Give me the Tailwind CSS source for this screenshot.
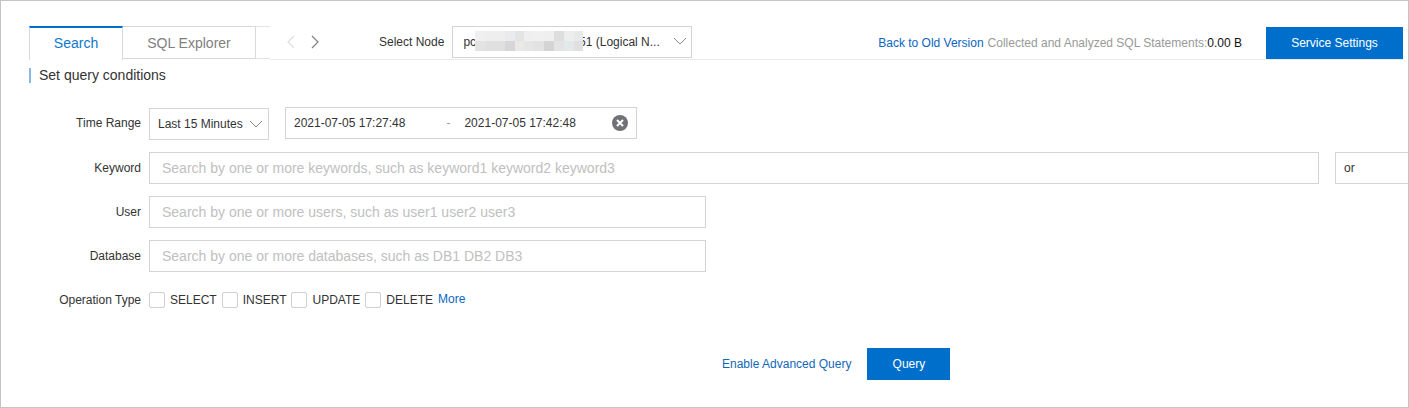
<!DOCTYPE html>
<html lang="en">
<head>
<meta charset="utf-8">
<title>Search</title>
<script src="https://cdn.jsdelivr.net/npm/@tailwindcss/browser@4"></script>
</head>
<body class="bg-white">
<div class="w-[1409px] h-[408px] border border-[#c4c4c4] overflow-hidden font-['Liberation_Sans',Arial,sans-serif] text-xs text-[#333]">
  <!-- top bar -->
  <div class="flex items-start h-[33px] mt-[25px] ml-[28px] mr-[5px]">
    <div class="w-[94px] h-[34px] border-t-2 border-t-[#006fcc] border-l border-l-[#d9d9d9] border-r border-r-[#d9d9d9] text-sm text-[#0d78cf] flex items-center justify-center bg-white relative z-10 pb-[2px]">Search</div>
    <div class="w-[133px] h-[33px] border border-[#d9d9d9] border-l-0 text-sm text-[#7f7f7f] flex items-center justify-center">SQL Explorer</div>
    <div class="w-[14px] h-[33px] border-t border-b border-[#e3e3e3]"></div>
    <div class="flex-1 h-[34px] border-b border-[#ebebeb] flex items-start">
      <div class="flex gap-[14px] ml-[16px] mt-[9px]">
        <svg width="10" height="14" viewBox="0 0 10 14" fill="none" stroke="#dedede" stroke-width="1.2"><path d="M8 1 2 7l6 6"/></svg>
        <svg width="10" height="14" viewBox="0 0 10 14" fill="none" stroke="#808080" stroke-width="1.2"><path d="M2 1l6 6-6 6"/></svg>
      </div>
      <span class="ml-[59px] mt-[9px] leading-[14px]">Select Node</span>
      <div class="relative ml-[8px] w-[240px] h-[32px] border border-[#d4d4d4] flex items-center pl-[10px]">
        <span>pc</span><span class="w-[103px]"></span><span class="whitespace-nowrap">51 (Logical N...</span>
        <div class="absolute left-[22px] top-[4px] w-[108px] h-[20px] grid grid-cols-[repeat(11,1fr)] grid-rows-2">
          <i class="bg-[#efefef]"></i><i class="bg-[#eeeeee]"></i><i class="bg-[#eeeeee]"></i><i class="bg-[#e9ebee]"></i><i class="bg-[#e4e4e4]"></i><i class="bg-[#efefef]"></i><i class="bg-[#f0f0f0]"></i><i class="bg-[#efefef]"></i><i class="bg-[#dedede]"></i><i class="bg-[#ededed]"></i><i class="bg-[#e8eaea]"></i>
          <i class="bg-[#e3e3e3]"></i><i class="bg-[#e0e0e0]"></i><i class="bg-[#e0e0e0]"></i><i class="bg-[#d6d6d8]"></i><i class="bg-[#ebe9e8]"></i><i class="bg-[#e4e6e6]"></i><i class="bg-[#e2e2e2]"></i><i class="bg-[#d4d4d4]"></i><i class="bg-[#e2e4e4]"></i><i class="bg-[#e3e8e8]"></i><i class="bg-[#e0e0e0]"></i>
        </div>
        <svg class="absolute right-[4px] top-[10px]" width="14" height="9" viewBox="0 0 14 9" fill="none" stroke="#8a8a8a"><path d="M1 1l6 6 6-6"/></svg>
      </div>
      <div class="flex-1 flex justify-end items-start">
        <a class="text-[#0a66c2] mt-[10px] leading-[14px]">Back to Old Version</a>
        <span class="ml-[4px] mt-[10px] leading-[14px] text-[#999] whitespace-nowrap">Collected and Analyzed SQL Statements:<span class="text-[#111]">0.00 B</span></span>
        <button class="ml-[24px] mt-[1px] w-[137px] h-[32px] bg-[#006fcc] text-white text-xs">Service Settings</button>
      </div>
    </div>
  </div>
  <!-- section title -->
  <div class="ml-[28px] mt-[9px] h-[15px] border-l-2 border-[#88b9e3] pl-[8px] flex items-center text-sm text-[#333]"><span class="leading-[15px]">Set query conditions</span></div>
  <!-- form -->
  <div class="mt-[25px] flex flex-col">
    <div class="flex items-start h-[33px]">
      <label class="w-[140px] text-right self-center pb-[3px]">Time Range</label>
      <div class="ml-[8px] w-[120px] h-[32px] border border-[#d4d4d4] flex items-center pl-[8px] relative">
        Last 15 Minutes
        <svg class="absolute right-[5px] top-[11px]" width="14" height="9" viewBox="0 0 14 9" fill="none" stroke="#8a8a8a"><path d="M1 1l6 6 6-6"/></svg>
      </div>
      <div class="ml-[16px] w-[352px] h-[32px] -mt-[1px] border border-[#d4d4d4] flex items-center pl-[8px] relative">
        <span>2021-07-05 17:27:48</span>
        <span class="ml-[41px] text-[#999]">-</span>
        <span class="ml-[14px]">2021-07-05 17:42:48</span>
        <svg class="absolute right-[8px] top-[7px]" width="16" height="16" viewBox="0 0 16 16"><circle cx="8" cy="8" r="8" fill="#6f7378"/><path d="M5 5l6 6M11 5l-6 6" stroke="#fff" stroke-width="2"/></svg>
      </div>
    </div>
    <div class="flex items-center mt-[11px] h-[32px]">
      <label class="w-[140px] text-right">Keyword</label>
      <div class="ml-[8px] w-[1170px] h-[32px] border border-[#d4d4d4] flex items-center pl-[12px] text-sm text-[#c0c0c0]">Search by one or more keywords, such as keyword1 keyword2 keyword3</div>
      <div class="ml-[16px] flex-1 h-[32px] border border-r-0 border-[#d4d4d4] flex items-center pl-[8px]">or</div>
    </div>
    <div class="flex items-center mt-[12px] h-[32px]">
      <label class="w-[140px] text-right">User</label>
      <div class="ml-[8px] w-[557px] h-[32px] border border-[#d4d4d4] flex items-center pl-[12px] text-sm text-[#c0c0c0]">Search by one or more users, such as user1 user2 user3</div>
    </div>
    <div class="flex items-center mt-[12px] h-[32px]">
      <label class="w-[140px] text-right">Database</label>
      <div class="ml-[8px] w-[557px] h-[32px] border border-[#d4d4d4] flex items-center pl-[12px] text-sm text-[#c0c0c0]">Search by one or more databases, such as DB1 DB2 DB3</div>
    </div>
    <div class="flex items-center mt-[12px] h-[32px]">
      <label class="w-[140px] text-right">Operation Type</label>
      <span class="ml-[8px] w-[16px] h-[16px] border border-[#d0d0d0] rounded-[2px]"></span>
      <span class="ml-[5px]">SELECT</span>
      <span class="ml-[5px] w-[16px] h-[16px] border border-[#d0d0d0] rounded-[2px]"></span>
      <span class="ml-[5px]">INSERT</span>
      <span class="ml-[5px] w-[16px] h-[16px] border border-[#d0d0d0] rounded-[2px]"></span>
      <span class="ml-[5px]">UPDATE</span>
      <span class="ml-[5px] w-[16px] h-[16px] border border-[#d0d0d0] rounded-[2px]"></span>
      <span class="ml-[5px]">DELETE</span>
      <a class="ml-[5px] text-[#0a66c2] -mt-[2px]">More</a>
    </div>
  </div>
  <div class="flex items-center mt-[32px] ml-[721px]">
    <a class="text-[#1268b8]">Enable Advanced Query</a>
    <button class="ml-[16px] w-[83px] h-[32px] bg-[#006fcc] text-white text-xs">Query</button>
  </div>
</div>
</body>
</html>
